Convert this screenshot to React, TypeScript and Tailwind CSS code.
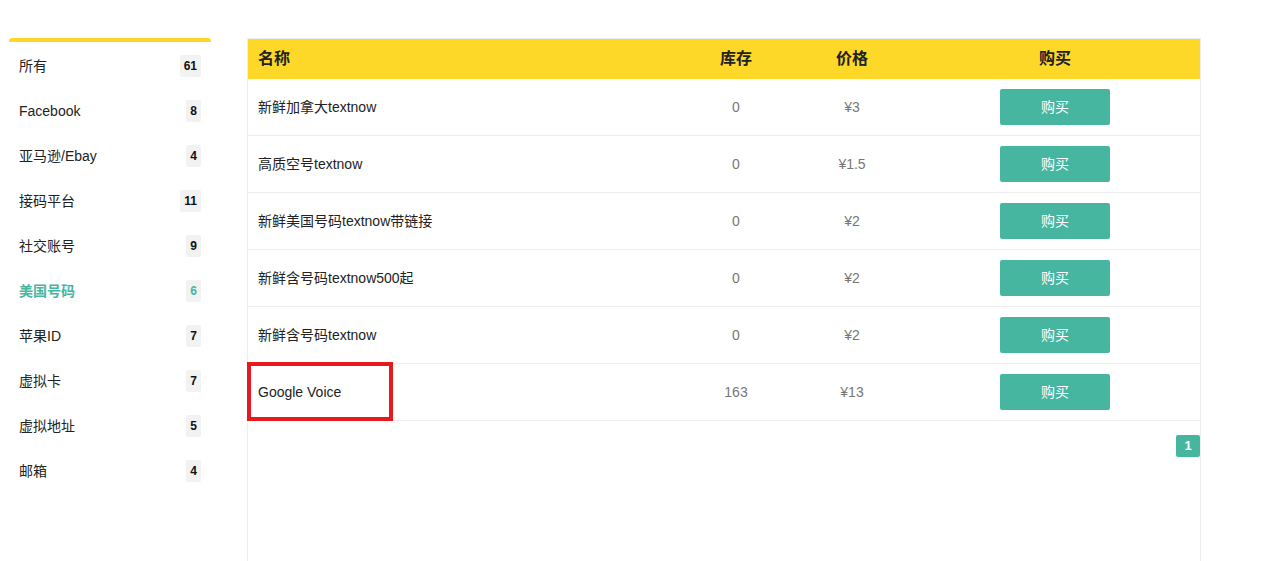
import React from "react";

type Category = { name: string; count: number; active?: boolean };
type Product = { name: string; stock: number; price: string };

const categories: Category[] = [
  { name: "所有", count: 61 },
  { name: "Facebook", count: 8 },
  { name: "亚马逊/Ebay", count: 4 },
  { name: "接码平台", count: 11 },
  { name: "社交账号", count: 9 },
  { name: "美国号码", count: 6, active: true },
  { name: "苹果ID", count: 7 },
  { name: "虚拟卡", count: 7 },
  { name: "虚拟地址", count: 5 },
  { name: "邮箱", count: 4 },
];

const products: Product[] = [
  { name: "新鲜加拿大textnow", stock: 0, price: "¥3" },
  { name: "高质空号textnow", stock: 0, price: "¥1.5" },
  { name: "新鲜美国号码textnow带链接", stock: 0, price: "¥2" },
  { name: "新鲜含号码textnow500起", stock: 0, price: "¥2" },
  { name: "新鲜含号码textnow", stock: 0, price: "¥2" },
  { name: "Google Voice", stock: 163, price: "¥13" },
];

const Sidebar: React.FC = () => (
  <div className="w-[202px] shrink-0 mt-[38px]">
    <div className="h-[4px] bg-[#fed829] rounded-t-[3px]" />
    <ul className="pt-[2px]">
      {categories.map((c) => (
        <li
          key={c.name}
          className={`h-[45px] flex items-center justify-between pl-[10px] pr-[10px] text-[14px] ${
            c.active ? "text-[#47b6a1] font-bold" : "text-[#222]"
          }`}
        >
          <span>{c.name}</span>
          <span
            className={`h-[22px] min-w-[15px] px-[4px] mb-[2px] flex items-start justify-center pt-[2px] rounded-[2px] bg-[#f2f2f2] text-[12px] font-bold ${
              c.active ? "text-[#47b6a1]" : "text-[#111]"
            }`}
          >
            {c.count}
          </span>
        </li>
      ))}
    </ul>
  </div>
);

const ProductTable: React.FC = () => (
  <div className="w-[954px] mt-[38px] border border-[#eee] border-b-0 min-h-[523px] flex flex-col">
    <div className="h-[40px] bg-[#fed829] flex items-center text-[16px] font-bold text-[#222]">
      <div className="w-[430px] pl-[10px]">名称</div>
      <div className="w-[116px] text-center">库存</div>
      <div className="w-[116px] text-center">价格</div>
      <div className="flex-1 text-center">购买</div>
    </div>
    <div className="relative">
      {products.map((p) => (
        <div
          key={p.name}
          className="h-[57px] flex items-center border-b border-[#eee] text-[14px]"
        >
          <div className="w-[430px] pl-[10px] text-[#222]">{p.name}</div>
          <div className="w-[116px] text-center text-[#777]">{p.stock}</div>
          <div className="w-[116px] text-center text-[#777]">{p.price}</div>
          <div className="flex-1 flex justify-center">
            <button className="w-[110px] h-[36px] rounded-[2px] bg-[#47b6a1] text-white text-[14px]">
              购买
            </button>
          </div>
        </div>
      ))}
      <div className="absolute left-[-1px] top-[283px] w-[146px] h-[59px] border-[4px] border-[#e8191e] pointer-events-none" />
    </div>
    <div className="flex justify-end mt-[14px]">
      <span className="w-[24px] h-[22px] flex items-center justify-center rounded-[2px] bg-[#47b6a1] text-white text-[13px] font-bold">
        1
      </span>
    </div>
  </div>
);

const App: React.FC = () => {
  return (
    <div
      className="w-[1261px] h-[561px] overflow-hidden bg-white flex gap-[36px] pl-[9px]"
      style={{ fontFamily: '"Liberation Sans", "Noto Sans CJK SC", sans-serif' }}
    >
      <Sidebar />
      <ProductTable />
    </div>
  );
};

export default App;
